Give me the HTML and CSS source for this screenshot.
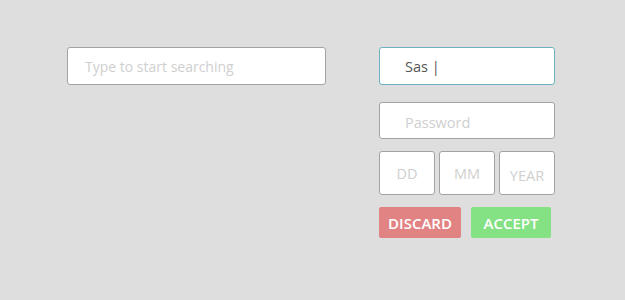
FILE: index.html
```html
<!DOCTYPE html>
<html lang="en">
<head>
  <meta charset="UTF-8" />
  <title>Inputs</title>
  <link rel="stylesheet" href="styles.css">
</head>
<body>
  <div class="page">
    <!-- search -->
    <div class="search-col">
      <input class="field search" type="text" placeholder="Type to start searching">
    </div>

    <!-- login form -->
    <form class="login">
      <input class="field user" type="text" value="Sas |">
      <input class="field pass" type="password" placeholder="Password">
      <div class="date-row">
        <input class="field date" type="text" placeholder="DD">
        <input class="field date" type="text" placeholder="MM">
        <input class="field date year" type="text" placeholder="YEAR">
      </div>
      <div class="btn-row">
        <button type="button" class="btn discard">DISCARD</button>
        <button type="button" class="btn accept">ACCEPT</button>
      </div>
    </form>
  </div>
</body>
</html>
```

FILE: styles.css
```css
body {
  margin: 0;
  background: #dedede;
  font-family: 'Open Sans', sans-serif;
}

.page {
  display: flex;
  gap: 53px;
  padding: 47px 0 0 67px;
}

.field {
  box-sizing: border-box;
  margin: 0;
  background: #fff;
  border: 1px solid #a3a3a3;
  border-radius: 3px;
  font-family: 'Open Sans', sans-serif;
  font-size: 14.5px;
  color: #555;
  outline: none;
}

.field::placeholder {
  color: #cfcfcf;
}

.search {
  width: 259px;
  height: 38px;
  padding: 0 17px;
  font-size: 14px;
}

.login {
  display: flex;
  flex-direction: column;
  width: 176px;
  margin: 0;
}

.user {
  width: 176px;
  height: 38px;
  padding: 0 25px;
  border-color: #6fb1be;
}

.pass {
  width: 176px;
  height: 37px;
  margin-top: 17px;
  padding: 3px 25px 0;
}

.date-row {
  display: flex;
  gap: 4px;
  margin-top: 12px;
}

.date {
  width: 56px;
  height: 44px;
  padding: 0;
  text-align: center;
}

.year {
  padding-top: 4px;
}

.btn-row {
  display: flex;
  gap: 10px;
  margin-top: 12px;
}

.btn {
  height: 31px;
  border: none;
  border-radius: 2px;
  color: #fff;
  font-family: 'Open Sans', sans-serif;
  font-weight: 600;
  font-size: 15px;
  padding: 0;
  cursor: pointer;
}

.discard {
  width: 82px;
  background: #e28383;
}

.accept {
  width: 80px;
  background: #84e184;
}
```
